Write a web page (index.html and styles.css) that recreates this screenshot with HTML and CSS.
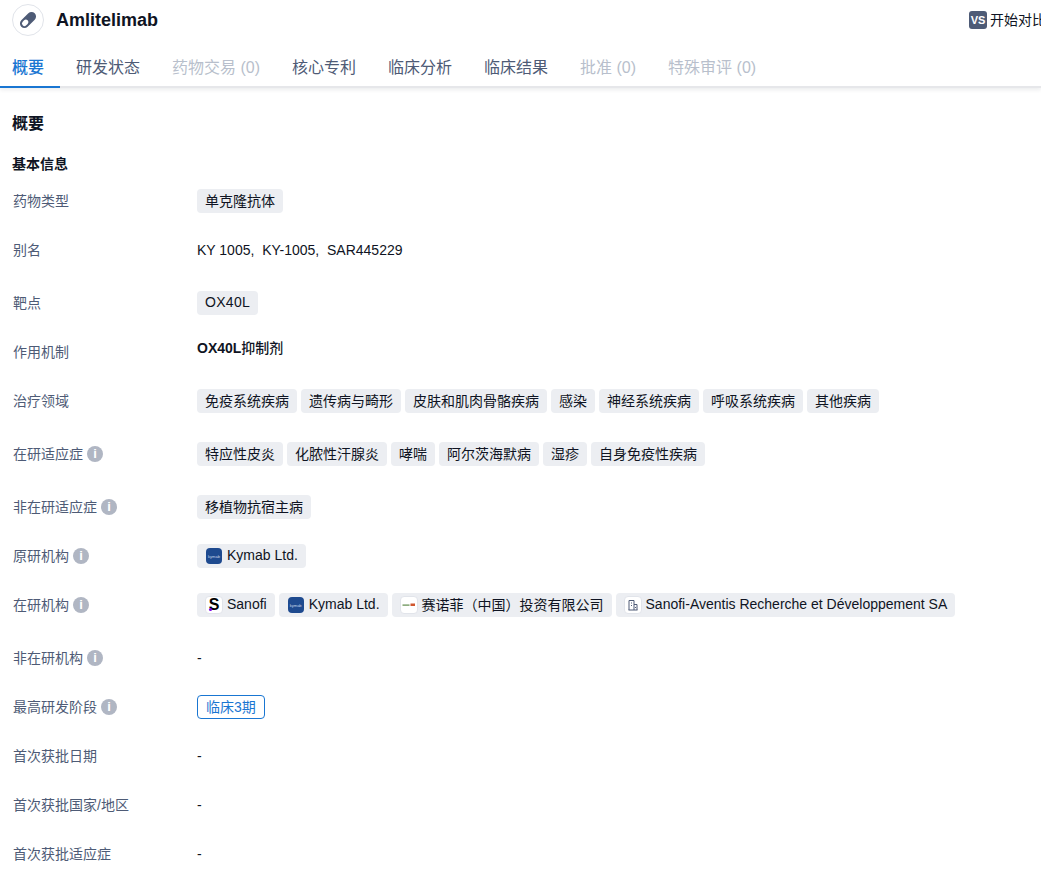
FILE: index.html
```html
<!DOCTYPE html>
<html lang="zh-CN">

<head>
    <meta charset="UTF-8">
    <meta name="viewport" content="width=device-width, initial-scale=1.0">
    <title>Amlitelimab - 概要</title>
    <link rel="stylesheet" href="styles.css">
</head>

<body>
    <header class="page-head">
        <div class="top-bar">
            <div class="drug-title">
                <span class="drug-icon">
                    <svg width="24" height="24" viewBox="0 0 24 24">
                        <g transform="rotate(-45 12 12)">
                            <rect x="2.5" y="7.5" width="19" height="9" rx="4.5" fill="#4e5b76"/>
                            <rect x="4.5" y="9.5" width="7" height="5" rx="2.5" fill="#fff"/>
                        </g>
                    </svg>
                </span>
                <h1>Amlitelimab</h1>
            </div>
            <a class="compare" href="#">
                <span class="vs-badge">VS</span>
                <span class="compare-text">开始对比</span>
            </a>
        </div>
        <nav class="tabs">
            <a class="tab active" href="#">概要</a>
            <a class="tab" href="#">研发状态</a>
            <a class="tab disabled" href="#">药物交易 (0)</a>
            <a class="tab" href="#">核心专利</a>
            <a class="tab" href="#">临床分析</a>
            <a class="tab" href="#">临床结果</a>
            <a class="tab disabled" href="#">批准 (0)</a>
            <a class="tab disabled" href="#">特殊审评 (0)</a>
        </nav>
    </header>

    <main class="content">
        <h2>概要</h2>
        <h3>基本信息</h3>

        <div class="row">
            <div class="label">药物类型</div>
            <div class="value"><span class="tag">单克隆抗体</span></div>
        </div>
        <div class="row tall">
            <div class="label">别名</div>
            <div class="value">KY 1005,&nbsp; KY-1005,&nbsp; SAR445229</div>
        </div>
        <div class="row">
            <div class="label">靶点</div>
            <div class="value"><span class="tag wide-text">OX40L</span></div>
        </div>
        <div class="row">
            <div class="label">作用机制</div>
            <div class="value raised"><span><b>OX40L</b>抑制剂</span></div>
        </div>
        <div class="row tall">
            <div class="label">治疗领域</div>
            <div class="value">
                <span class="tag">免疫系统疾病</span>
                <span class="tag">遗传病与畸形</span>
                <span class="tag">皮肤和肌肉骨骼疾病</span>
                <span class="tag">感染</span>
                <span class="tag">神经系统疾病</span>
                <span class="tag">呼吸系统疾病</span>
                <span class="tag">其他疾病</span>
            </div>
        </div>
        <div class="row tall">
            <div class="label">在研适应症 <span class="info">i</span></div>
            <div class="value">
                <span class="tag">特应性皮炎</span>
                <span class="tag">化脓性汗腺炎</span>
                <span class="tag">哮喘</span>
                <span class="tag">阿尔茨海默病</span>
                <span class="tag">湿疹</span>
                <span class="tag">自身免疫性疾病</span>
            </div>
        </div>
        <div class="row">
            <div class="label">非在研适应症 <span class="info">i</span></div>
            <div class="value"><span class="tag">移植物抗宿主病</span></div>
        </div>
        <div class="row">
            <div class="label">原研机构 <span class="info">i</span></div>
            <div class="value">
                <span class="tag"><span class="org-logo kymab">kymab</span>Kymab Ltd.</span>
            </div>
        </div>
        <div class="row tall">
            <div class="label">在研机构 <span class="info">i</span></div>
            <div class="value">
                <span class="tag">
                    <span class="org-logo plain sanofi">S</span>Sanofi
                </span>
                <span class="tag"><span class="org-logo kymab">kymab</span>Kymab Ltd.</span>
                <span class="tag">
                    <span class="org-logo plain">
                        <svg width="14" height="6" viewBox="0 0 14 6">
                            <rect x="0.5" y="2.5" width="7" height="1.2" fill="#5f8a4a"/>
                            <rect x="8.5" y="1.5" width="4.5" height="2.5" fill="#d0562e"/>
                        </svg>
                    </span>赛诺菲（中国）投资有限公司
                </span>
                <span class="tag">
                    <span class="org-logo plain">
                        <svg width="12" height="12" viewBox="0 0 12 12" fill="none" stroke="#4e5b76" stroke-width="1">
                            <path d="M2 11V1.5h5V11M7 5.5h3V11M1.5 11h9M4 4h1M4 6.5h1M8.5 8v1"/>
                        </svg>
                    </span>Sanofi-Aventis Recherche et Développement SA
                </span>
            </div>
        </div>
        <div class="row">
            <div class="label">非在研机构 <span class="info">i</span></div>
            <div class="value">-</div>
        </div>
        <div class="row">
            <div class="label">最高研发阶段 <span class="info">i</span></div>
            <div class="value"><span class="phase">临床3期</span></div>
        </div>
        <div class="row">
            <div class="label">首次获批日期</div>
            <div class="value">-</div>
        </div>
        <div class="row">
            <div class="label">首次获批国家/地区</div>
            <div class="value">-</div>
        </div>
        <div class="row">
            <div class="label">首次获批适应症</div>
            <div class="value">-</div>
        </div>
    </main>
</body>

</html>
```

FILE: styles.css
```css
:root {
    --text: #0f1423;
    --muted: #4e5b76;
    --disabled: #b8bfcc;
    --blue: #1976d2;
    --tag-bg: #eceef2;
}

body {
    font-family: "Liberation Sans", "Noto Sans CJK SC", sans-serif;
    margin: 0;
    padding: 0;
    background-color: #fff;
    color: var(--text);
    font-size: 14px;
    overflow: hidden;
}

.page-head {
    box-shadow: 0 2px 4px rgba(15, 20, 35, 0.08);
}

.top-bar {
    display: flex;
    align-items: center;
    height: 40px;
    padding-left: 12px;
    white-space: nowrap;
}

.drug-title {
    display: flex;
    align-items: center;
    flex: 0 0 957px;
}

.drug-icon {
    display: flex;
    align-items: center;
    justify-content: center;
    box-sizing: border-box;
    width: 32px;
    height: 32px;
    border: 1px solid #e1e4ea;
    border-radius: 50%;
    margin-right: 12px;
}

h1 {
    font-size: 18px;
    font-weight: 700;
    margin: 0;
}

.compare {
    display: flex;
    flex: none;
    align-items: center;
    gap: 3px;
    color: var(--text);
    text-decoration: none;
}

.compare-text {
    padding-bottom: 2px;
}

.vs-badge {
    width: 18px;
    height: 18px;
    border-radius: 3px;
    background-color: var(--muted);
    color: #fff;
    font-size: 11px;
    font-weight: 700;
    line-height: 18px;
    text-align: center;
}

.tabs {
    display: flex;
    height: 48px;
    gap: 32px;
    padding-left: 12px;
    box-shadow: inset 0 -2px #e6e7ea;
}

.tab {
    position: relative;
    color: var(--muted);
    font-size: 16px;
    line-height: 55px;
    text-decoration: none;
    white-space: nowrap;
}

.tab.active {
    color: var(--blue);
    font-weight: 500;
}

.tab.active::after {
    content: "";
    position: absolute;
    left: -12px;
    right: -16px;
    bottom: 0;
    height: 2px;
    background-color: var(--blue);
}

.tab.disabled {
    color: var(--disabled);
}

.content {
    padding: 24px 12px 0;
}

h2 {
    font-size: 16px;
    font-weight: 700;
    line-height: 24px;
    margin: 0 0 16px;
}

h3 {
    font-size: 14px;
    font-weight: 700;
    line-height: 24px;
    margin: 0 0 13px;
}

.row {
    display: flex;
    align-items: flex-start;
    height: 49px;
}

.row.tall {
    height: 53px;
}

.label {
    display: flex;
    box-sizing: border-box;
    flex: 0 0 185px;
    align-items: center;
    gap: 4px;
    height: 22px;
    padding-left: 1px;
    color: var(--muted);
}

.value {
    display: flex;
    align-items: center;
    gap: 4px;
    min-height: 24px;
    white-space: nowrap;
}

.value.raised {
    margin-top: -5px;
    font-weight: 500;
}

.value.raised b {
    font-weight: 700;
}

.wide-text {
    letter-spacing: 0.3px;
}

.info {
    display: inline-block;
    width: 16px;
    height: 16px;
    margin-top: 2px;
    border-radius: 50%;
    background-color: #b0b6c3;
    color: #fff;
    font-size: 13px;
    font-weight: 700;
    line-height: 16px;
    text-align: center;
}

.tag {
    display: inline-flex;
    box-sizing: border-box;
    align-items: center;
    height: 24px;
    padding: 0 8px 2px;
    border-radius: 4px;
    background-color: var(--tag-bg);
}

.org-logo {
    display: inline-flex;
    position: relative;
    align-items: center;
    justify-content: center;
    box-sizing: border-box;
    margin-top: 2px;
    overflow: hidden;
}

.org-logo.kymab {
    width: 16px;
    height: 16px;
    margin-right: 5px;
    margin-left: 1px;
    border-radius: 4px;
    background-color: #1e4a8f;
    color: #cdd9ea;
    font-size: 4px;
}

.org-logo.plain {
    width: 18px;
    height: 18px;
    margin-right: 4px;
    border: 1px solid #e1e4ea;
    border-radius: 4px;
    background-color: #fff;
}

.org-logo.sanofi {
    color: #000;
    font-size: 16px;
    font-weight: 700;
}

/* purple dot of the Sanofi mark */
.org-logo.sanofi::after {
    content: "";
    position: absolute;
    left: 3px;
    bottom: 2px;
    width: 3px;
    height: 3px;
    border-radius: 50%;
    background-color: #7a00e6;
}

.phase {
    display: inline-block;
    height: 22px;
    padding: 0 8px;
    border: 1px solid var(--blue);
    border-radius: 4px;
    color: var(--blue);
    line-height: 22px;
}
```
